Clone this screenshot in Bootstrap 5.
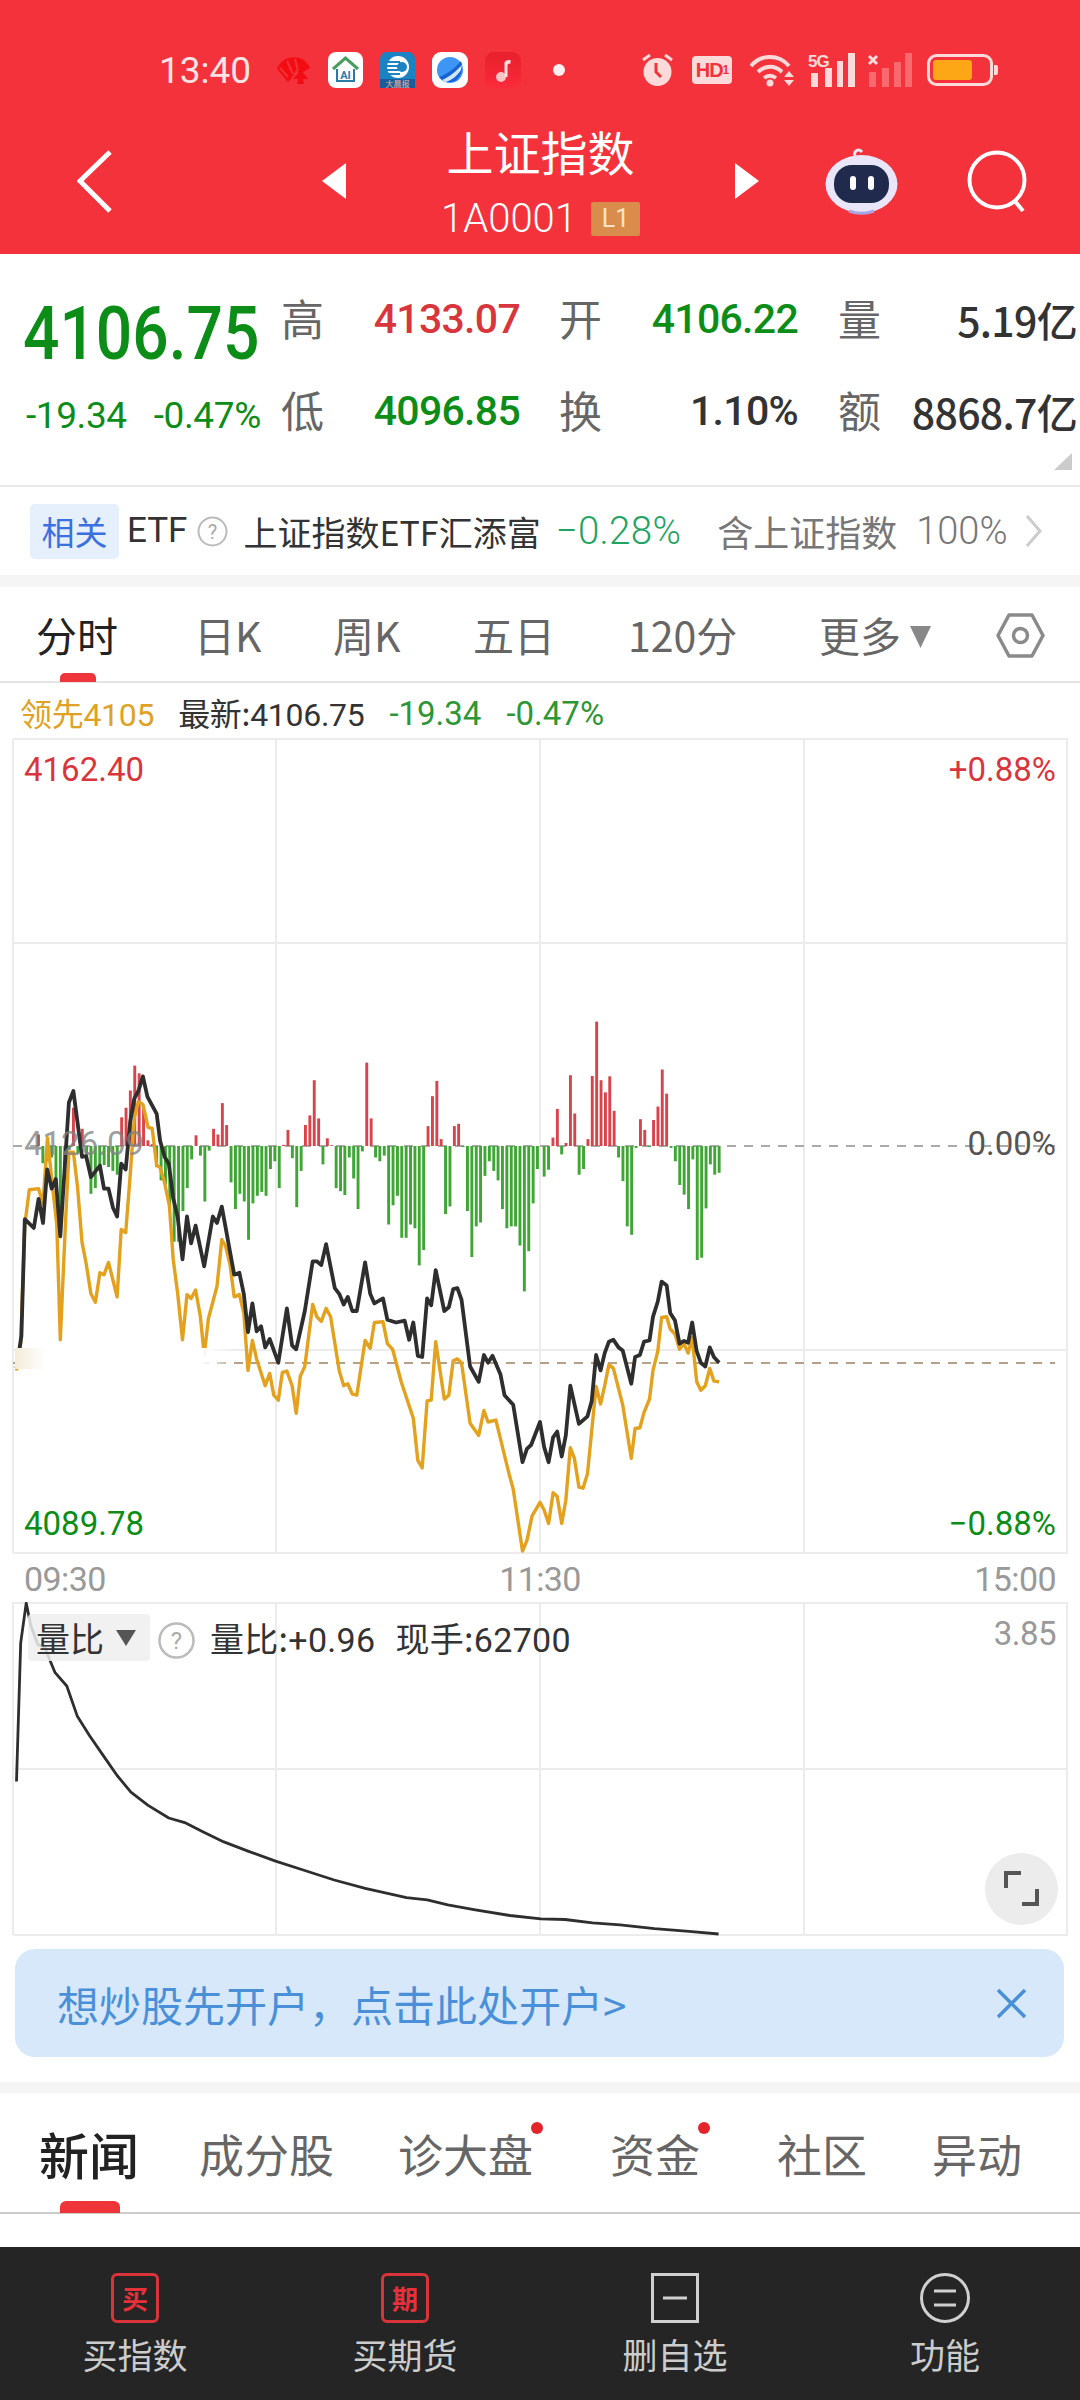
<!DOCTYPE html>
<html lang="zh">
<head>
  <meta charset="UTF-8">
  <title>上证指数</title>
  <meta name="viewport" content="width=device-width, initial-scale=1" />
  <link href="https://cdn.jsdelivr.net/npm/bootstrap@5.3.0/dist/css/bootstrap.min.css" rel="stylesheet">
  <style>
    html, body { width: 1080px; height: 2400px; overflow: hidden; }
    body { background: #fff; font-family: Roboto, "Noto Sans CJK SC", sans-serif; color: #333; }
    .cn { font-family: "Noto Sans CJK SC", sans-serif; }
    .num { font-family: Roboto, sans-serif; }

    .hero { background: #f3323b; color: #fff; height: 254px; }
    .status-row { height: 118px; padding: 22px 80px 0 159px; }
    .clock-txt { font-size: 37px; color: #fde4e4; line-height: 1; margin-right: 25px; }
    .app-icons { gap: 17px; }
    .ms-18 { margin-left: 18px; }
    .ms-13 { margin-left: 13px; }
    .ms-15 { margin-left: 15px; }
    .hd-ico { width: 40px; height: 28px; background: #fcdada; border-radius: 4px; color: #f3323b; font: 700 20px "Liberation Sans", sans-serif; letter-spacing: -1px; }
    .hd-ico small { font-size: 12px; }
    .dot-note { width: 12px; height: 12px; border-radius: 50%; background: #fdf0f0; margin-left: 15px; }
    .title-row { height: 126px; padding-left: 77px; }
    .prev-tri { margin-left: 210px; }
    .title-box { width: 389px; }
    .title-main { font-size: 47px; line-height: 60px; }
    .title-sub { font-size: 40px; line-height: 46px; gap: 14px; margin-top: 15px; }
    .sub-code { font-family: Roboto, sans-serif; font-weight: 300; }
    .lv-tag { background: #d98c4c; color: #fbe3c8; font-family: Roboto, sans-serif; font-size: 25px; width: 49px; height: 34px; line-height: 34px; text-align: center; border-radius: 2px; }
    .robot-ico { margin-left: 66px; }
    .search-ico { margin-left: 69px; }

    .quote-box { height: 231px; padding: 19px 2px 0 26px; }
    .price-col { width: 255px; }
    .price-big { font-size: 74px; line-height: 88px; font-weight: 500; margin: 17px 0 0 -3px; color: #0b8d18; transform: scaleX(.866); transform-origin: left center; white-space: nowrap; }
    .price-sub { font-size: 37px; line-height: 44px; margin-top: 16px; color: #0b8d18; letter-spacing: -.4px; gap: 27px; }
    .quote-grid { display: grid; grid-template-columns: 41px 198px 39px 41px 198px 40px 41px 198px; grid-auto-rows: 92px; align-items: center; }
    .q-lbl { font-size: 43px; color: #666; line-height: 1; margin-top: -4px; white-space: nowrap; }
    .q-val { font-size: 41px; font-weight: 500; text-align: right; letter-spacing: -.7px; line-height: 1; white-space: nowrap; }
    .q-up { color: #d8363c; }
    .q-dn { color: #0b8d18; }
    .q-flat { color: #333; }
    .fold-tri { position: absolute; right: 8px; bottom: 15px; }

    .etf-row { height: 90px; border-top: 2px solid #e8e8e8; padding-left: 30px; font-size: 35px; white-space: nowrap; }
    .etf-tag { width: 89px; height: 55px; line-height: 55px; text-align: center; border-radius: 5px; background: #e6effc; color: #3a70e0; font-size: 33px; margin-right: 8px; }
    .etf-code { font-family: Roboto, sans-serif; color: #333; }
    .etf-help { margin-left: 10px; margin-right: 15px; }
    .etf-name { font-size: 34px; color: #333; }
    .etf-chg { font-family: Roboto, sans-serif; font-size: 38.500px; color: #1fa463; margin-left: 15px; font-weight: 300; letter-spacing: .3px; }
    .etf-hold { font-size: 36px; color: #777; margin-left: 36px; }
    .etf-pct { font-family: Roboto, sans-serif; font-size: 38px; color: #777; margin-left: 19px; font-weight: 300; }
    .etf-more { margin-left: 17px; }
    .band { height: 12px; background: #f5f5f5; }

    .period-tabs { position: relative; display: grid; grid-template-columns: 158px 139px 140px 155px 191px 91px 86px 49px; align-items: center; height: 96px; padding: 2px 0 0 36px; border-bottom: 2px solid #e4e4e4; font-size: 41px; color: #666; white-space: nowrap; }
    .period-tabs .on { color: #222; }
    .more-tri { margin-top: 4px; }
    .period-mark { position: absolute; left: 60px; bottom: -1px; width: 36px; height: 9px; background: #f0353a; border-radius: 5px 5px 0 0; }

    .legend-row { height: 55px; padding: 6px 0 0 20px; font-size: 32px; letter-spacing: -.3px; white-space: nowrap; }
    .legend-lead { color: #e0a222; margin-right: 24px; }
    .legend-new { color: #333; margin-right: 25px; }
    .legend-chg { font-family: Roboto, sans-serif; font-size: 33px; letter-spacing: 0; color: #2d9636; margin-right: 25px; }

    .chart-box { position: relative; height: 816px; }
    .chart-box svg, .vol-box svg { display: block; }
    .c-lbl { position: absolute; font-size: 33px; line-height: 40px; white-space: nowrap; }
    .lbl-left { left: 24px; }
    .lbl-right { right: 24px; }
    .lbl-top { top: 12px; }
    .lbl-mid { top: 386px; }
    .lbl-low { top: 766px; }
    .c-red { color: #d8363c; }
    .c-green { color: #0b8d18; }
    .c-ghost { color: rgba(130,130,130,.8); }
    .c-dark { color: #555; }
    .axis-row { height: 48px; padding: 2px 24px 0; font-size: 34px; color: #999; letter-spacing: -.6px; }

    .vol-box { position: relative; height: 334px; }
    .vol-tag { position: absolute; left: 28px; top: 12px; width: 122px; height: 47px; background: rgba(238,238,238,.85); border-radius: 4px; font-size: 34px; color: #333; padding-left: 8px; gap: 12px; }
    .vol-box .vol-help { position: absolute; left: 158px; top: 20px; }
    .vol-txt { position: absolute; left: 210px; top: 14px; font-size: 34px; line-height: 44px; color: #333; white-space: nowrap; letter-spacing: .3px; }
    .vol-txt b { font-weight: 400; margin-left: 20px; }
    .vol-max { position: absolute; right: 24px; top: 12px; font-size: 33px; color: #999; line-height: 40px; letter-spacing: -.5px; }
    .zoom-btn { position: absolute; left: 985px; top: 251px; width: 73px; height: 72px; border-radius: 50%; background: #ececec; }

    .open-tip { margin: 13px 16px 0 15px; height: 108px; background: #d8e8fb; border-radius: 20px; padding: 0 37px 0 42px; color: #4a90d9; font-size: 42px; }
    .band-low { height: 11px; background: #f5f5f5; margin-top: 25px; }
    .news-tabs { position: relative; display: grid; grid-template-columns: 159px 199px 212px 167px 155px 148px; align-items: center; height: 121px; padding: 2px 0 0 40px; border-bottom: 2px solid #ccc; font-size: 45px; color: #666; white-space: nowrap; }
    .news-tabs .on { color: #222; font-size: 50px; font-weight: 500; margin-left: -1px; }
    .news-mark { position: absolute; left: 60px; bottom: -1px; width: 60px; height: 12px; background: #f0353a; border-radius: 6px 6px 0 0; }
    .red-pip { position: absolute; top: 29px; width: 12px; height: 12px; border-radius: 50%; background: #e3242b; }
    .pip-a { left: 531px; }
    .pip-b { left: 698px; }
    .news-gap { height: 33px; }

    .foot-bar { height: 153px; background: #252525; color: #ccc; }
    .foot-item { width: 270px; padding-top: 26px; font-size: 35px; }
    .foot-ico { height: 50px; }
    .foot-lbl { line-height: 46px; margin-top: 8px; }
    .buy-ico { width: 48px; height: 50px; border: 3px solid #d8343a; border-radius: 6px; color: #e8303a; font-size: 26px; line-height: 44px; text-align: center; font-weight: 700; }
  </style>
</head>
<body>

  <!-- red top area -->
  <header class="hero">
    <div class="status-row d-flex align-items-center justify-content-between">
      <div class="d-flex align-items-center">
        <span class="clock-txt">13:40</span>
        <div class="d-flex align-items-center app-icons">
          <svg width="35" height="30" viewBox="0 0 35 30">
            <path d="M1 14C4 5 14 0 23 3c5 1 9 5 11 10l-7 4-4 1-3-3-5 9-3 3-5-6z" fill="#f30d12"/>
            <path d="M4 13l8 9M11 6l6 13M19 4l3 12" stroke="#f3323b" stroke-width="2" fill="none"/>
            <path d="M25 15l7 9h-5l1 5h-7l1-5h-5z" fill="#f30d12"/>
          </svg>
          <svg width="35" height="36" viewBox="0 0 35 36">
            <rect width="35" height="36" rx="8" fill="#fff"/>
            <path d="M5 17L17.500 6 30 17" fill="none" stroke="#4a9e5c" stroke-width="3"/>
            <path d="M9 17v12h17V17" fill="none" stroke="#2b7ba8" stroke-width="2"/>
            <text x="17.500" y="27" font-size="11" font-weight="700" text-anchor="middle" fill="#2b7ba8" font-family="Roboto">AI</text>
          </svg>
          <svg width="35" height="36" viewBox="0 0 35 36">
            <rect width="35" height="36" rx="7" fill="#1b83c4"/>
            <circle cx="18" cy="15" r="11" fill="#fff"/>
            <path d="M7 10h13M6 14h15M6 18h15M8 22h12" stroke="#1b83c4" stroke-width="2"/>
            <circle cx="22" cy="15" r="5" fill="#1b83c4"/>
            <rect y="27" width="35" height="9" fill="#1b5d9a"/>
            <text x="17.500" y="35" font-size="8" text-anchor="middle" fill="#f4b0a0" font-family="Noto Sans CJK SC">大晨报</text>
          </svg>
          <svg width="36" height="36" viewBox="0 0 36 36">
            <rect width="36" height="36" rx="9" fill="#fff"/>
            <circle cx="18" cy="18" r="13" fill="#3d95f5"/>
            <path d="M7 25C16 22 24 15 29 9c3 8 0 16-6 20-6 2-12 1-16-4z" fill="#1763d4"/>
            <path d="M10 28c8-3 15-10 20-15l-1 5c-4 6-10 11-16 12z" fill="#cfe6ff"/>
          </svg>
          <svg width="36" height="36" viewBox="0 0 36 36">
            <defs><linearGradient id="mus" x1="0" y1="0" x2="0" y2="1"><stop offset="0" stop-color="#e8202c"/><stop offset="1" stop-color="#fb2a3c"/></linearGradient></defs>
            <rect width="36" height="36" rx="9" fill="url(#mus)"/>
            <ellipse cx="16" cy="25" rx="5" ry="5" fill="#fbc3c3"/>
            <path d="M19.500 25V11c0-2 2-3 6-3v3.500c-2 0-3 .5-3 2V25z" fill="#fde0e0"/>
          </svg>
          <span class="dot-note"></span>
        </div>
      </div>
      <div class="d-flex align-items-center">
        <svg width="33" height="34" viewBox="0 0 33 34">
          <circle cx="16.500" cy="19" r="14" fill="#fcdada"/>
          <path d="M2 7l7-5M31 7l-7-5" stroke="#fcdada" stroke-width="3"/>
          <path d="M15 10v9l5 5" stroke="#f3323b" stroke-width="3" fill="none"/>
        </svg>
        <span class="hd-ico d-inline-flex align-items-center justify-content-center ms-18">HD<small>1</small></span>
        <svg class="ms-18" width="45" height="34" viewBox="0 0 45 34">
          <path d="M1 13C11 1 29 1 39 13M8 19c7-7 17-7 24 0M14 25c4-3 8-3 12 0" fill="none" stroke="#fcdada" stroke-width="4"/>
          <circle cx="20" cy="30" r="3.500" fill="#fcdada"/>
          <path d="M34 24l5-6 5 6zM34 27l5 6 5-6z" fill="#fcdada"/>
        </svg>
        <svg class="ms-13" width="47" height="34" viewBox="0 0 47 34">
          <text x="0" y="14" font-size="17" font-weight="700" fill="#fcdada" font-family="Liberation Sans" letter-spacing="-1">5G</text>
          <rect x="3" y="20" width="7" height="14" fill="#fcdada"/><rect x="17" y="15" width="7" height="19" fill="#fcdada"/><rect x="29" y="8" width="6" height="26" fill="#fcdada"/><rect x="40" y="0" width="7" height="34" fill="#fcdada"/>
        </svg>
        <svg class="ms-13" width="44" height="34" viewBox="0 0 44 34">
          <path d="M1 3l8 8M9 3l-8 8" stroke="#fcdada" stroke-width="3"/>
          <rect x="1" y="19" width="7" height="15" fill="#f96a6f"/><rect x="14" y="15" width="7" height="19" fill="#f96a6f"/><rect x="26" y="9" width="7" height="25" fill="#f96a6f"/><rect x="37" y="0" width="7" height="34" fill="#f96a6f"/>
        </svg>
        <svg class="ms-15" width="73" height="32" viewBox="0 0 73 32">
          <rect x="1.500" y="1.500" width="63" height="29" rx="8" fill="none" stroke="#fcdada" stroke-width="3"/>
          <rect x="6" y="6" width="39" height="20" rx="3" fill="#fda716"/>
          <path d="M67 11h2a2 2 0 0 1 2 2v6a2 2 0 0 1-2 2h-2z" fill="#fcdada"/>
        </svg>
      </div>
    </div>

    <div class="title-row d-flex align-items-center">
      <svg width="35" height="63" viewBox="0 0 35 63"><path d="M33 2L3 31l30 30" fill="none" stroke="#fff" stroke-width="5"/></svg>
      <svg class="prev-tri" width="24" height="36" viewBox="0 0 24 36"><path d="M24 0v36L0 18z" fill="#fff"/></svg>
      <div class="title-box d-flex flex-column align-items-center cn">
        <div class="title-main">上证指数</div>
        <div class="title-sub d-flex align-items-center">
          <span class="sub-code">1A0001</span><span class="lv-tag">L1</span>
        </div>
      </div>
      <svg width="24" height="36" viewBox="0 0 24 36"><path d="M0 0v36l24-18z" fill="#fff"/></svg>
      <svg class="robot-ico" width="73" height="67" viewBox="0 0 73 67">
        <path d="M30 8c-2-5 4-8 7-4" fill="none" stroke="#e9e6f5" stroke-width="3"/>
        <ellipse cx="36.500" cy="36" rx="36" ry="29" fill="#e8e6f8"/>
        <rect x="9" y="17" width="55" height="38" rx="18" fill="#1f2a4d"/>
        <rect x="25" y="28" width="6" height="14" rx="3" fill="#fff"/>
        <rect x="43" y="28" width="6" height="14" rx="3" fill="#fff"/>
        <path d="M24 63c8 3 17 3 25 0" fill="none" stroke="#a9a6e6" stroke-width="3"/>
      </svg>
      <svg class="search-ico" width="62" height="62" viewBox="0 0 62 62">
        <circle cx="30" cy="30" r="27.500" fill="none" stroke="#fff" stroke-width="4"/>
        <path d="M47 50l9 11" stroke="#fff" stroke-width="4"/>
      </svg>
    </div>
  </header>

  <!-- quote numbers -->
  <section class="quote-box d-flex position-relative">
    <div class="price-col">
      <div class="price-big">4106.75</div>
      <div class="price-sub d-flex"><span>-19.34</span><span>-0.47%</span></div>
    </div>
    <div class="quote-grid cn">
      <span class="q-lbl">高</span><span class="q-val q-up num">4133.07</span><span></span>
      <span class="q-lbl">开</span><span class="q-val q-dn num">4106.22</span><span></span>
      <span class="q-lbl">量</span><span class="q-val q-flat">5.19亿</span>
      <span class="q-lbl">低</span><span class="q-val q-dn num">4096.85</span><span></span>
      <span class="q-lbl">换</span><span class="q-val q-flat num">1.10%</span><span></span>
      <span class="q-lbl">额</span><span class="q-val q-flat">8868.7亿</span>
    </div>
    <svg class="fold-tri" width="18" height="17" viewBox="0 0 18 17"><path d="M18 0v17H0z" fill="#ccc"/></svg>
  </section>

  <div class="etf-row d-flex align-items-center cn">
    <span class="etf-tag">相关</span>
    <span class="etf-code">ETF</span>
    <svg class="etf-help" width="31" height="31" viewBox="0 0 31 31"><circle cx="15.500" cy="15.500" r="14" fill="none" stroke="#bbb" stroke-width="2"/><text x="15.500" y="23" font-size="20" text-anchor="middle" fill="#aaa" font-family="Roboto">?</text></svg>
    <span class="etf-name">上证指数ETF汇添富</span>
    <span class="etf-chg">−0.28%</span>
    <span class="etf-hold">含上证指数</span>
    <span class="etf-pct">100%</span>
    <svg class="etf-more" width="17" height="32" viewBox="0 0 17 32"><path d="M2 1l13 15L2 31" fill="none" stroke="#ccc" stroke-width="3"/></svg>
  </div>
  <div class="band"></div>

  <!-- period tabs -->
  <nav class="period-tabs cn">
    <span class="on">分时</span>
    <span>日K</span>
    <span>周K</span>
    <span>五日</span>
    <span>120分</span>
    <span>更多</span>
    <svg class="more-tri" width="21" height="22" viewBox="0 0 21 22"><path d="M0 0h21L10.500 22z" fill="#888"/></svg>
    <svg width="49" height="45" viewBox="0 0 49 45">
      <path d="M13 2h23l11 20.500L36 43H13L2 22.500z" fill="none" stroke="#8a8a8a" stroke-width="3.500" stroke-linejoin="round"/>
      <circle cx="24.500" cy="22.500" r="7" fill="none" stroke="#8a8a8a" stroke-width="3.500"/>
    </svg>
    <i class="period-mark"></i>
  </nav>

  <div class="legend-row d-flex align-items-center cn">
    <span class="legend-lead">领先<span class="num">4105</span></span>
    <span class="legend-new">最新:<span class="num">4106.75</span></span>
    <span class="legend-chg">-19.34</span>
    <span class="legend-chg">-0.47%</span>
  </div>

  <!-- main chart -->
  <div class="chart-box">
    <svg id="mainChart" width="1080" height="816" viewBox="0 738 1080 816"></svg>
    <span class="c-lbl c-red lbl-left lbl-top">4162.40</span>
    <span class="c-lbl c-red lbl-right lbl-top">+0.88%</span>
    <span class="c-lbl c-ghost lbl-left lbl-mid">4126.09</span>
    <span class="c-lbl c-dark lbl-right lbl-mid">0.00%</span>
    <span class="c-lbl c-green lbl-left lbl-low">4089.78</span>
    <span class="c-lbl c-green lbl-right lbl-low">−0.88%</span>
  </div>
  <div class="axis-row d-flex align-items-center justify-content-between">
    <span>09:30</span><span>11:30</span><span>15:00</span>
  </div>

  <!-- volume ratio chart -->
  <div class="vol-box">
    <svg id="volChart" width="1080" height="334" viewBox="0 1602 1080 334"></svg>
    <div class="vol-tag d-flex align-items-center cn">量比
      <svg width="20" height="16" viewBox="0 0 20 16"><path d="M0 0h20L10 16z" fill="#555"/></svg>
    </div>
    <svg class="vol-help" width="37" height="37" viewBox="0 0 37 37"><circle cx="18.500" cy="18.500" r="17" fill="none" stroke="#bbb" stroke-width="2.500"/><text x="18.500" y="27" font-size="24" text-anchor="middle" fill="#aaa" font-family="Roboto">?</text></svg>
    <span class="vol-txt cn">量比:<span class="num">+0.96</span><b>现手:</b><span class="num">62700</span></span>
    <span class="vol-max">3.85</span>
    <div class="zoom-btn">
      <svg width="73" height="72" viewBox="0 0 73 72"><path d="M21 35V20h15M52 36v15H37" fill="none" stroke="#555" stroke-width="4"/></svg>
    </div>
  </div>

  <!-- open account tip -->
  <div class="open-tip d-flex align-items-center justify-content-between cn">
    <span>想炒股先开户，点击此处开户&gt;</span>
    <svg width="31" height="31" viewBox="0 0 31 31"><path d="M2 2l27 27M29 2L2 29" stroke="#4a90d9" stroke-width="3.500"/></svg>
  </div>
  <div class="band-low"></div>

  <!-- news tabs -->
  <nav class="news-tabs cn">
    <span class="on">新闻</span>
    <span>成分股</span>
    <span>诊大盘</span>
    <span>资金</span>
    <span>社区</span>
    <span>异动</span>
    <i class="red-pip pip-a"></i>
    <i class="red-pip pip-b"></i>
    <i class="news-mark"></i>
  </nav>
  <div class="news-gap"></div>

  <!-- bottom bar -->
  <footer class="foot-bar d-flex cn">
    <div class="foot-item d-flex flex-column align-items-center">
      <div class="foot-ico"><div class="buy-ico">买</div></div>
      <div class="foot-lbl">买指数</div>
    </div>
    <div class="foot-item d-flex flex-column align-items-center">
      <div class="foot-ico"><div class="buy-ico">期</div></div>
      <div class="foot-lbl">买期货</div>
    </div>
    <div class="foot-item d-flex flex-column align-items-center">
      <svg class="foot-ico" width="48" height="50" viewBox="0 0 48 50"><rect x="1.500" y="1.500" width="45" height="47" fill="none" stroke="#d0d0d0" stroke-width="3"/><path d="M12 25h24" stroke="#d0d0d0" stroke-width="3"/></svg>
      <div class="foot-lbl">删自选</div>
    </div>
    <div class="foot-item d-flex flex-column align-items-center">
      <svg class="foot-ico" width="50" height="50" viewBox="0 0 50 50"><circle cx="25" cy="25" r="23.500" fill="none" stroke="#d0d0d0" stroke-width="3"/><path d="M14 18h22M14 32h22" stroke="#d0d0d0" stroke-width="3"/></svg>
      <div class="foot-lbl">功能</div>
    </div>
  </footer>

  <script src="https://cdn.jsdelivr.net/npm/bootstrap@5.3.0/dist/js/bootstrap.bundle.min.js"></script>
  <script>
    // chart data was read off the reference: x in page px, y in page px after the conversion below
    const sx = .3444, sy = .3827;
    const toL = (a) => a.map(p => [p[0] * sx, 980 + p[1] * sy]);
    const toR = (a) => a.map(p => [540 + p[0] * sx, 980 + p[1] * sy]);

    const blackL = [[48,1015],[62,930],[72,625],[98,648],[112,572],[125,635],[137,495],[150,545],[162,520],[175,670],[200,320],[213,290],[238,462],[250,460],[264,515],[290,485],[302,545],[315,545],[328,595],[340,618],[352,480],[365,495],[378,370],[390,310],[402,290],[415,252],[428,305],[455,350],[465,420],[478,462],[490,480],[503,570],[516,620],[530,730],[543,618],[555,688],[568,642],[593,748],[618,618],[630,635],[644,592],[680,770],[695,765],[708,820],[720,920],[733,845],[745,918],[758,905],[770,960],[783,938],[808,1000],[833,858],[848,955],[860,965],[885,865],[908,735],[920,735],[933,745],[947,690],[972,805],[985,820],[998,848],[1010,828],[1023,865],[1036,865],[1060,738],[1075,820],[1087,845],[1112,832],[1125,888],[1150,895],[1175,890],[1188,940],[1200,895],[1213,982],[1226,985],[1240,832],[1252,850],[1265,758],[1290,865],[1303,855],[1316,808],[1328,805],[1340,835],[1365,1010],[1390,1050],[1405,980],[1417,1000],[1430,982],[1453,1030],[1465,1085],[1490,1110],[1517,1260],[1530,1225],[1542,1215],[1568,1155]];
    const blackR = [[0,1155],[12,1220],[25,1260],[38,1195],[50,1180],[63,1245],[75,1190],[88,1060],[113,1160],[138,1140],[150,1100],[163,980],[176,1020],[188,975],[200,945],[213,940],[228,960],[240,968],[265,1055],[276,985],[290,980],[302,945],[318,942],[328,880],[342,840],[353,788],[368,798],[378,870],[392,890],[405,950],[418,943],[430,948],[442,895],[455,970],[467,1000],[480,1010],[493,960],[505,985],[520,1000]];
    const goldL = [[48,1020],[60,950],[72,640],[85,548],[112,545],[125,585],[138,412],[150,520],[165,640],[175,940],[190,640],[200,450],[213,450],[225,540],[238,685],[250,740],[264,820],[277,842],[290,765],[302,770],[315,738],[340,828],[352,652],[365,660],[378,510],[390,360],[402,318],[415,325],[430,385],[442,388],[455,485],[465,490],[478,530],[492,590],[503,730],[516,820],[530,940],[543,822],[555,832],[568,810],[582,880],[593,980],[605,885],[630,800],[644,678],[655,695],[668,745],[680,828],[695,822],[708,870],[720,1020],[733,942],[745,990],[770,1060],[783,1028],[795,1085],[808,1098],[820,1025],[833,1022],[848,1060],[860,1132],[872,1035],[885,1010],[908,848],[920,880],[933,892],[947,858],[960,880],[985,1020],[998,1060],[1010,1055],[1023,1082],[1036,1085],[1060,942],[1075,962],[1087,895],[1112,893],[1125,950],[1140,965],[1165,1050],[1200,1145],[1213,1255],[1226,1275],[1240,1100],[1252,1098],[1265,945],[1290,1095],[1303,1085],[1316,995],[1328,990],[1340,1000],[1365,1158],[1390,1190],[1405,1125],[1417,1155],[1440,1150],[1478,1290],[1490,1330],[1517,1492],[1530,1465],[1545,1400],[1568,1365]];
    const goldR = [[0,1365],[12,1385],[25,1420],[38,1340],[50,1350],[63,1420],[75,1360],[88,1222],[100,1250],[113,1325],[125,1328],[138,1290],[163,1062],[176,1108],[188,1060],[200,1005],[213,1015],[240,1110],[265,1250],[276,1172],[290,1170],[302,1130],[318,1095],[328,1020],[342,970],[353,882],[368,880],[378,912],[392,925],[405,965],[418,950],[430,975],[442,935],[455,1050],[467,1072],[480,1060],[493,1015],[505,1048],[520,1050]];

    // bar heights, + is up from the zero line
    const barsL = [0,0,0,0,0,30,-45,-40,-30,-100,-190,-60,-10,100,-20,45,-30,-125,-110,-60,-50,-55,-65,-75,75,100,145,210,190,100,15,5,-55,-90,-100,-160,-250,-250,-170,-110,-35,28,-25,-145,-12,45,30,112,55,-95,-165,-125,-145,-245,-150,-130,-120,-130,-60,-40,-110,3,42,-32,-160,-65,55,80,172,72,-48,20,2,-110,-118,-128,-30,-85,-165,-14,218,72,-30,-40,-25,-205,-155,-130,-240,-240,-205,-215,-312,-272,52,130,170,18,-178,-158,52,58,-3,-170,-290,-210,-200,-78,-40,-65,-90,-165,-215,-210,-210,-260,-380,-275,-150,-60];
    const barsR = [-80,-62,22,97,-22,8,185,85,-75,-60,18,183,325,172,140,182,92,-30,-92,-210,-232,-5,70,42,-3,68,103,200,137,-5,-40,-102,-127,-165,-35,-298,-292,-163,-48,-75,-70];

    let s = '';
    const pts = (a) => a.map(p => p[0].toFixed(1) + ',' + p[1].toFixed(1)).join(' ');

    // grid
    [276, 540, 804].forEach(x => { s += `<line x1="${x}" y1="739" x2="${x}" y2="1553" stroke="#ececec" stroke-width="2"/>`; });
    [739, 943, 1350, 1553].forEach(y => { s += `<line x1="13" y1="${y}" x2="1068" y2="${y}" stroke="#ececec" stroke-width="2"/>`; });
    [13, 1067].forEach(x => { s += `<line x1="${x}" y1="739" x2="${x}" y2="1553" stroke="#ececec" stroke-width="2"/>`; });

    // dashed zero and leader line
    s += '<line x1="13" y1="1146" x2="1055" y2="1146" stroke="#aaa" stroke-width="2" stroke-dasharray="9 8"/>';
    s += '<line x1="13" y1="1363" x2="1055" y2="1363" stroke="#b5a08a" stroke-width="2" stroke-dasharray="9 8"/>';

    // +/- bars
    const bar = (x, v) => {
      if (!v) return;
      const h = Math.abs(v) * sy;
      const y = v > 0 ? 1146 - h : 1146;
      s += `<rect x="${(x - 1.4).toFixed(1)}" y="${y.toFixed(1)}" width="2.9" height="${h.toFixed(1)}" fill="${v > 0 ? '#d8444c' : '#3fa535'}"/>`;
    };
    barsL.forEach((v, i) => bar((48 + 12.71 * i) * sx, v));
    barsR.forEach((v, i) => bar(540 + (12 + 12.7 * i) * sx, v));

    // price lines
    s += `<polyline points="${pts(toL(goldL).concat(toR(goldR)))}" fill="none" stroke="#e3a11d" stroke-width="3.400" stroke-linejoin="round"/>`;
    s += `<polyline points="${pts(toL(blackL).concat(toR(blackR)))}" fill="none" stroke="#2e2e2e" stroke-width="3.800" stroke-linejoin="round"/>`;

    // the reference has a fading white smear over the left of the leader line
    s += '<defs><linearGradient id="smear" x1="0" x2="1" y1="0" y2="0"><stop offset="0" stop-color="#f3ecd9"/><stop offset=".14" stop-color="#fff"/><stop offset=".85" stop-color="#fff"/><stop offset="1" stop-color="#fff" stop-opacity="0"/></linearGradient></defs>';
    s += '<rect x="15" y="1348" width="220" height="21" fill="url(#smear)"/>';
    document.getElementById('mainChart').innerHTML = s;

    // volume ratio
    const volLine = [[24,668],[30,250],[38,130],[45,200],[55,255],[65,262],[72,300],[80,340],[97,380],[112,470],[130,530],[150,590],[170,650],[190,700],[215,740],[245,778],[268,792],[295,820],[325,850],[360,878],[400,908],[440,935],[485,965],[530,990],[590,1018],[620,1025],[650,1040],[690,1055],[740,1072],[785,1082],[820,1084],[860,1094],[900,1100],[950,1112],[1000,1120],[1043,1128]]
      .map(p => [p[0] * .689, 1560 + p[1] * .3316]);
    let v = '';
    [13, 276, 540, 804, 1067].forEach(x => { v += `<line x1="${x}" y1="1602" x2="${x}" y2="1935" stroke="#ececec" stroke-width="2"/>`; });
    [1603, 1769, 1935].forEach(y => { v += `<line x1="13" y1="${y}" x2="1068" y2="${y}" stroke="#ececec" stroke-width="2"/>`; });
    v += `<polyline points="${pts(volLine)}" fill="none" stroke="#2e2e2e" stroke-width="2.800" stroke-linejoin="round"/>`;
    document.getElementById('volChart').innerHTML = v;
  </script>
</body>
</html>
